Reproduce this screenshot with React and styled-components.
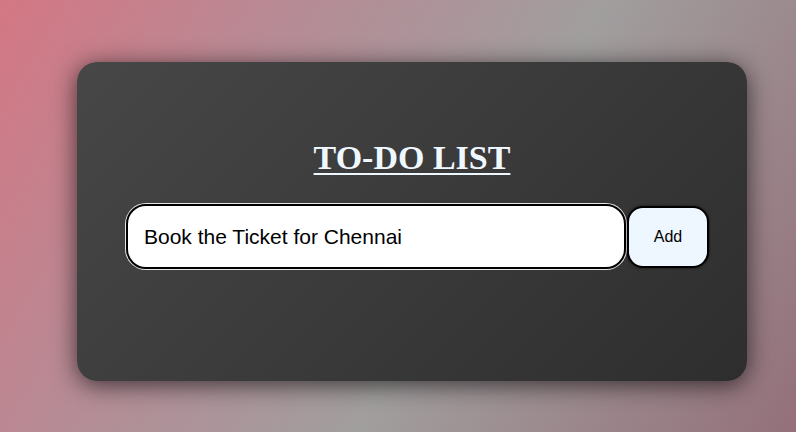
import React, { useState } from 'react';
import styled, { createGlobalStyle } from 'styled-components';

const GlobalStyle = createGlobalStyle`
  html, body {
    margin: 0;
    padding: 0;
  }
  body {
    font-family: "Liberation Sans", Arial, sans-serif;
  }
`;

const Page = styled.div`
  width: 796px;
  height: 432px;
  box-sizing: border-box;
  padding: 62px 0 0 77px;
  background: linear-gradient(120deg, #d47784 0%, #b58c96 30%, #a19e9e 58%, #94707a 100%);
  overflow: hidden;
`;

const Card = styled.div`
  width: 670px;
  height: 319px;
  box-sizing: border-box;
  padding-top: 77px;
  border-radius: 20px;
  background: linear-gradient(135deg, #474747 0%, #2e2e2e 100%);
  box-shadow: 0 4px 24px rgba(0, 0, 0, 0.65);
  display: flex;
  flex-direction: column;
  align-items: center;
  gap: 27px;
`;

const Title = styled.h1`
  margin: 0;
  font-family: "Liberation Serif", "Times New Roman", serif;
  font-size: 34px;
  font-weight: bold;
  color: #f0f8ff;
  text-decoration: underline;
  text-decoration-thickness: 2px;
  text-underline-offset: 4px;
`;

const Row = styled.form`
  display: flex;
  align-items: center;
  align-self: stretch;
  padding: 0 38px 0 49px;
  gap: 1px;
`;

const TaskInput = styled.input`
  flex: 1;
  height: 65px;
  box-sizing: border-box;
  padding: 0 16px;
  border: 2px solid #000;
  border-radius: 20px;
  box-shadow: 0 0 0 1px #e6e6e6;
  background: #fff;
  font-family: "Liberation Sans", Arial, sans-serif;
  font-size: 21px;
  color: #000;
  outline: none;
`;

const AddButton = styled.button`
  width: 82px;
  height: 62px;
  border: 2px solid #000;
  border-radius: 16px;
  background: #eef6ff;
  box-shadow: 0 0 3px rgba(0, 0, 0, 0.6);
  font-family: "Liberation Sans", Arial, sans-serif;
  font-size: 16px;
  color: #000;
  cursor: pointer;
`;

export default function App() {
  const [task, setTask] = useState('Book the Ticket for Chennai');

  return (
    <>
      <GlobalStyle />
      <Page>
        <Card>
          <Title>TO-DO LIST</Title>
          <Row onSubmit={e => e.preventDefault()}>
            <TaskInput value={task} onChange={e => setTask(e.target.value)} />
            <AddButton type="submit">Add</AddButton>
          </Row>
        </Card>
      </Page>
    </>
  );
}
